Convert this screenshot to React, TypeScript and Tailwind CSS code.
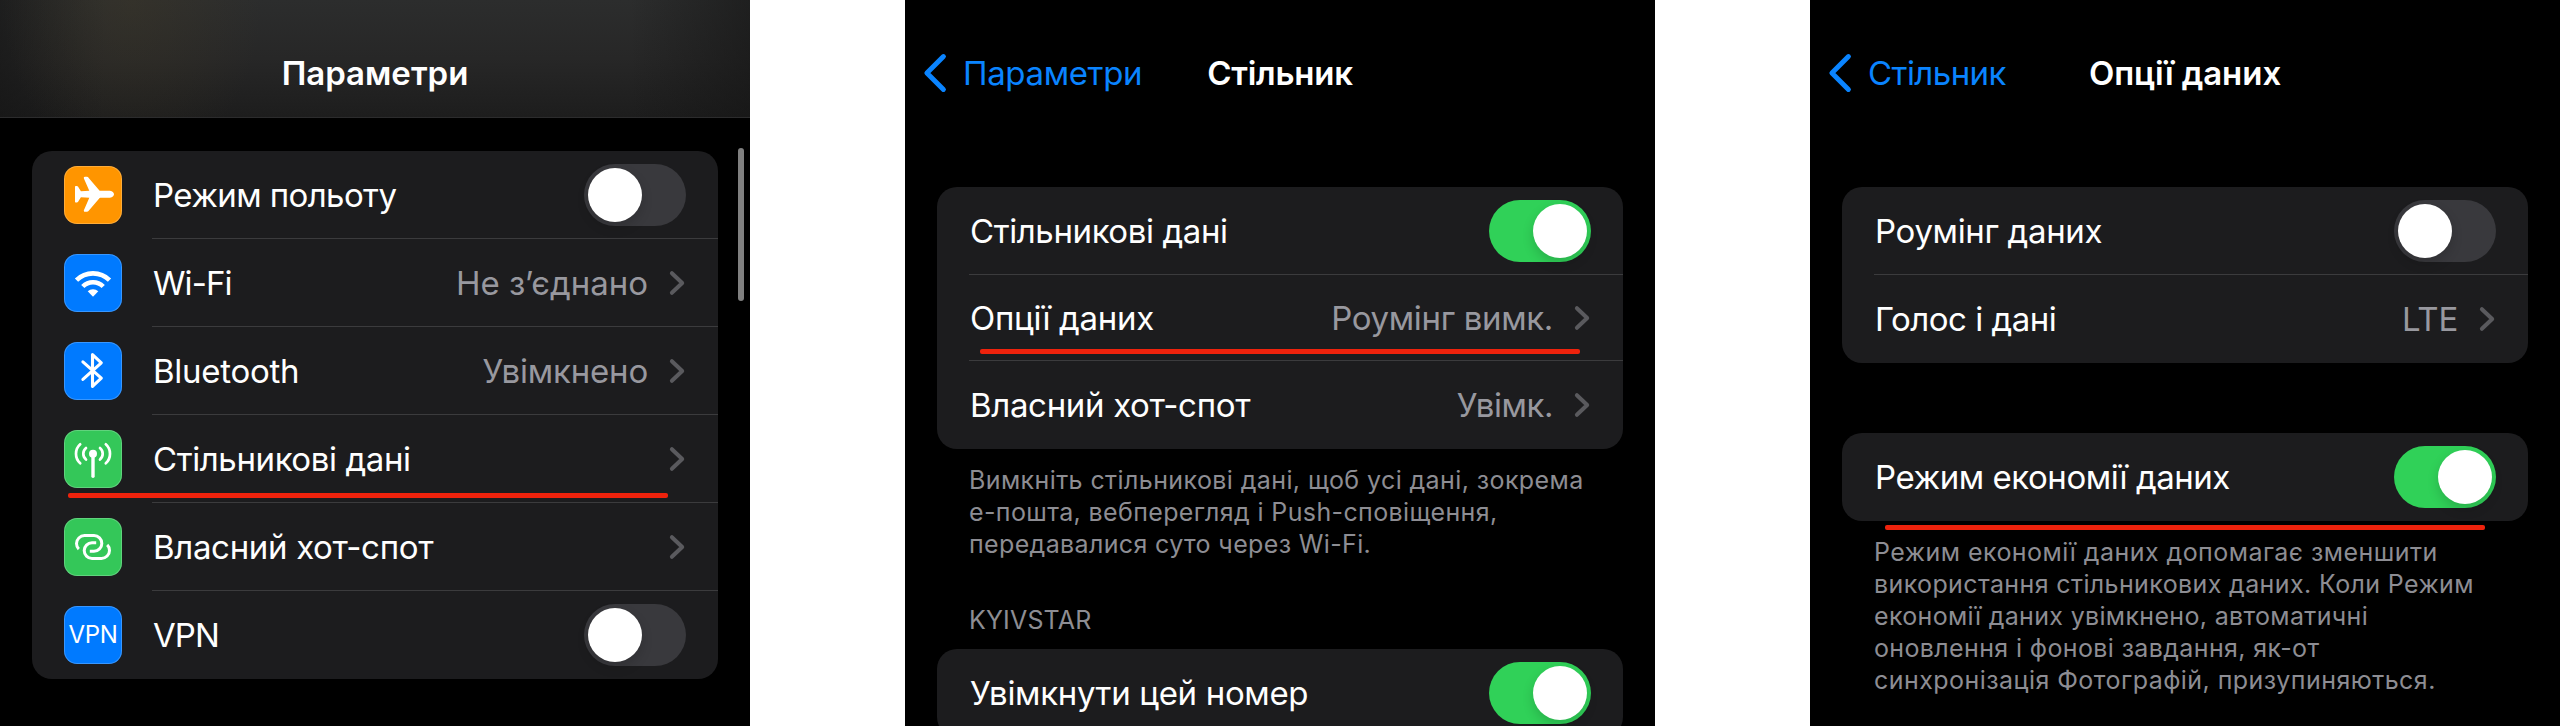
import React, { type ReactNode } from "react";

function Toggle({ on }: { on?: boolean }) {
  return (
    <span
      className={`flex h-[62px] w-[102px] shrink-0 items-center rounded-full p-1 ${
        on ? "justify-end bg-[#30d158]" : "justify-start bg-[#39393d]"
      }`}
    >
      <span className="size-[54px] rounded-full bg-white shadow-[0_5px_12px_rgba(0,0,0,0.16)]" />
    </span>
  );
}

function Chevron() {
  return (
    <svg viewBox="0 0 18 28" className="h-7 w-[18px] shrink-0" fill="none">
      <path d="M3.9 4.2 14.2 14 3.9 23.8" stroke="#5a5a5e" strokeWidth="4" strokeLinecap="round" strokeLinejoin="round" />
    </svg>
  );
}

function IconTile({ color, children }: { color: string; children: ReactNode }) {
  return (
    <span
      className={`mr-[30px] flex size-[58px] shrink-0 items-center justify-center rounded-[13px] text-white shadow-[inset_0_0_0_1px_rgba(255,255,255,0.22)] ${color}`}
    >
      {children}
    </span>
  );
}

function Glyph({ children }: { children: ReactNode }) {
  return (
    <svg viewBox="0 0 58 58" className="size-full" fill="none" stroke="white" strokeLinecap="round" strokeLinejoin="round">
      {children}
    </svg>
  );
}

const airplane = (
  <Glyph>
    <path
      stroke="none"
      fill="white"
      d="M50 28.3C50 30.2 47.6 31.8 45 31.8H37C36 31.8 35.5 32.1 35 32.7L24.7 44.7C24.1 45.5 23.4 45.8 22.4 45.8H20.9C20 45.8 19.6 45 19.9 44.2L25.3 31.8L16.9 31.3L14.1 35.8C13.8 36.3 13.4 36.6 12.8 36.6H12C11.4 36.6 11 36.2 11 35.6V21C11 20.4 11.4 20 12 20H12.8C13.4 20 13.8 20.3 14.1 20.8L16.9 25.3L25.3 24.8L19.9 12.4C19.6 11.6 20 10.8 20.9 10.8H22.4C23.4 10.8 24.1 11.1 24.7 11.9L35 23.9C35.5 24.5 36 24.8 37 24.8H45C47.6 24.8 50 26.4 50 28.3Z"
    />
  </Glyph>
);

const wifi = (
  <Glyph>
    <path d="M12.5 26.2A23.3 23.3 0 0 1 45.5 26.2" strokeWidth="4.6" strokeLinecap="butt" />
    <path d="M18.8 32.5A14.4 14.4 0 0 1 39.2 32.5" strokeWidth="4.6" strokeLinecap="butt" />
    <path d="M23.7 37.3A7.8 7.8 0 0 1 34.3 37.3L29.5 42.2Q29 42.7 28.5 42.2Z" fill="white" stroke="none" />
  </Glyph>
);

const bluetooth = (
  <Glyph>
    <path d="M18.9 19.9 37.3 36.2 28.5 44.4V12.6L37.3 20.8 18.9 37.4" strokeWidth="3.1" />
  </Glyph>
);

const antenna = (
  <Glyph>
    <circle cx="29" cy="23.7" r="4" fill="white" stroke="none" />
    <path d="M29 24V46.2" strokeWidth="3.4" />
    <path
      d="M16.2 14.3C10.6 19.2 10.6 28.4 16.2 33.3M41.8 14.3C47.4 19.2 47.4 28.4 41.8 33.3M22 18C18.4 21 18.4 26.4 22 29.5M36 18C39.6 21 39.6 26.4 36 29.5"
      strokeWidth="2.7"
    />
  </Glyph>
);

const hotspot = (
  <Glyph>
    <path
      d="M25.8 33.2H30A7.8 7.8 0 0 0 30 17.6H20.5A8 8 0 0 0 12.5 25.6Q12.5 29 14.8 31.2M32.2 24.8H28A7.8 7.8 0 0 0 28 40.4H37.5A8 8 0 0 0 45.5 32.4Q45.5 29 43.2 26.8"
      strokeWidth="3"
      strokeLinecap="butt"
    />
  </Glyph>
);

type RowProps = {
  label: string;
  tracking: string;
  icon?: ReactNode;
  value?: string;
  valueTracking?: string;
  toggle?: "on" | "off";
  height?: string;
  last?: boolean;
};

function Row({ label, tracking, icon, value, valueTracking = "", toggle, height = "h-[88px]", last }: RowProps) {
  return (
    <div className={`flex items-center pl-8 ${height}`}>
      {icon}
      <div className={`flex h-full min-w-0 flex-1 items-center gap-5 pr-8 ${last ? "" : "shadow-[inset_0_-1px_0_#3b3b3d]"}`}>
        <span className={`flex-1 pl-px whitespace-nowrap ${tracking}`}>{label}</span>
        {value && <span className={`whitespace-nowrap text-[#98989f] ${valueTracking}`}>{value}</span>}
        {toggle ? <Toggle on={toggle === "on"} /> : <Chevron />}
      </div>
    </div>
  );
}

function Card({ children, className = "" }: { children: ReactNode; className?: string }) {
  return <section className={`mx-8 shrink-0 rounded-[20px] bg-[#1c1c1e] ${className}`}>{children}</section>;
}

function Screen({ children }: { children: ReactNode }) {
  return (
    <main className="relative flex h-[726px] w-[750px] shrink-0 flex-col overflow-hidden bg-black text-[33px] leading-[40px] text-white">
      {children}
    </main>
  );
}

function NavBar({ back, backTracking, title, titleTracking }: { back: string; backTracking: string; title: string; titleTracking: string }) {
  return (
    <header className="grid h-[146px] shrink-0 grid-cols-[1fr_auto_1fr] items-center">
      <a className="flex items-center gap-[13px] pl-[17px] text-[#0a84ff]">
        <svg viewBox="0 0 28 42" className="h-[42px] w-7" fill="none">
          <path d="M21.4 4.6 4.9 21 21.4 37.4" stroke="currentColor" strokeWidth="5" strokeLinecap="round" strokeLinejoin="round" />
        </svg>
        <span className={backTracking}>{back}</span>
      </a>
      <h1 className={`font-semibold ${titleTracking}`}>{title}</h1>
      <span />
    </header>
  );
}

function Underline({ className }: { className: string }) {
  return <span className={`absolute h-[5px] w-[600px] rounded-[2px] bg-[#ee220c] ${className}`} />;
}

function Note({ lines }: { lines: [string, string][] }) {
  return (
    <p className="mx-16 mt-[15px] shrink-0 text-[25px] leading-8 text-[#8d8d93]">
      {lines.map(([text, tracking]) => (
        <span key={text} className={`block whitespace-nowrap ${tracking}`}>
          {text}
        </span>
      ))}
    </p>
  );
}

export default function App() {
  return (
    <div className="flex h-[726px] w-[2560px] justify-between overflow-hidden bg-white font-['Inter','Liberation_Sans',sans-serif]">
      <Screen>
        <header className="flex h-[118px] shrink-0 items-center justify-center border-b border-[#2c2c2d] bg-[radial-gradient(ellipse_130px_170px_at_132px_0px,rgba(66,58,38,0.36),transparent),linear-gradient(to_right,rgba(20,20,20,0.6),transparent_14%,transparent_84%,rgba(20,20,20,0.55)),linear-gradient(to_bottom,#2c2d2d,#272727_50%,#1d1d1d)] pt-[29px]">
          <h1 className="font-semibold">Параметри</h1>
        </header>
        <Card className="mt-[33px]">
          <Row icon={<IconTile color="bg-[#ff9500]">{airplane}</IconTile>} label="Режим польоту" tracking="tracking-[-0.6px]" toggle="off" />
          <Row icon={<IconTile color="bg-[#007aff]">{wifi}</IconTile>} label="Wi-Fi" tracking="tracking-[-0.9px]" value="Не зʼєднано" />
          <Row
            icon={<IconTile color="bg-[#007aff]">{bluetooth}</IconTile>}
            label="Bluetooth"
            tracking="tracking-[-0.27px]"
            value="Увімкнено"
            valueTracking="tracking-[-0.2px]"
          />
          <Row icon={<IconTile color="bg-[#34c759]">{antenna}</IconTile>} label="Стільникові дані" tracking="tracking-[-0.4px]" />
          <Row icon={<IconTile color="bg-[#34c759]">{hotspot}</IconTile>} label="Власний хот-спот" tracking="tracking-[-0.33px]" />
          <Row
            icon={
              <IconTile color="bg-[#007aff]">
                <span className="text-[24px] leading-none tracking-[-0.4px]">VPN</span>
              </IconTile>
            }
            label="VPN"
            tracking="tracking-[-0.9px]"
            toggle="off"
            last
          />
        </Card>
        <Underline className="top-[493px] left-[68px]" />
        <span className="absolute top-[148px] right-[6px] h-[153px] w-[6px] rounded-full bg-[#808080]" />
      </Screen>

      <Screen>
        <NavBar back="Параметри" backTracking="tracking-[-0.36px]" title="Стільник" titleTracking="tracking-[-0.26px]" />
        <Card className="mt-[41px]">
          <Row label="Стільникові дані" tracking="tracking-[-0.4px]" toggle="on" />
          <Row
            label="Опції даних"
            tracking="tracking-[-0.3px]"
            value="Роумінг вимк."
            valueTracking="tracking-[-0.33px]"
            height="h-[86px]"
          />
          <Row label="Власний хот-спот" tracking="tracking-[-0.33px]" value="Увімк." valueTracking="tracking-[-0.45px]" last />
        </Card>
        <Note
          lines={[
            ["Вимкніть стільникові дані, щоб усі дані, зокрема", "tracking-[0.4px]"],
            ["е-пошта, вебперегляд і Push-сповіщення,", "tracking-[0.37px]"],
            ["передавалися суто через Wi-Fi.", "tracking-[0.36px]"],
          ]}
        />
        <h2 className="mx-16 mt-11 shrink-0 text-[25px] leading-8 tracking-[0.17px] text-[#8d8d93]">KYIVSTAR</h2>
        <Card className="mt-[13px]">
          <Row label="Увімкнути цей номер" tracking="tracking-[-0.33px]" toggle="on" last />
        </Card>
        <Underline className="top-[349px] left-[75px]" />
      </Screen>

      <Screen>
        <NavBar back="Стільник" backTracking="tracking-[-0.55px]" title="Опції даних" titleTracking="tracking-[-0.07px]" />
        <Card className="mt-[41px]">
          <Row label="Роумінг даних" tracking="tracking-[-0.33px]" toggle="off" />
          <Row label="Голос і дані" tracking="tracking-[-0.49px]" value="LTE" valueTracking="tracking-[-0.24px]" last />
        </Card>
        <Card className="mt-[70px]">
          <Row label="Режим економії даних" tracking="tracking-[-0.46px]" toggle="on" last />
        </Card>
        <Note
          lines={[
            ["Режим економії даних допомагає зменшити", "tracking-[0.46px]"],
            ["використання стільникових даних. Коли Режим", "tracking-[0.38px]"],
            ["економії даних увімкнено, автоматичні", "tracking-[0.33px]"],
            ["оновлення і фонові завдання, як-от", "tracking-[0.37px]"],
            ["синхронізація Фотографій, призупиняються.", "tracking-[0.45px]"],
          ]}
        />
        <Underline className="top-[525px] left-[75px]" />
      </Screen>
    </div>
  );
}
